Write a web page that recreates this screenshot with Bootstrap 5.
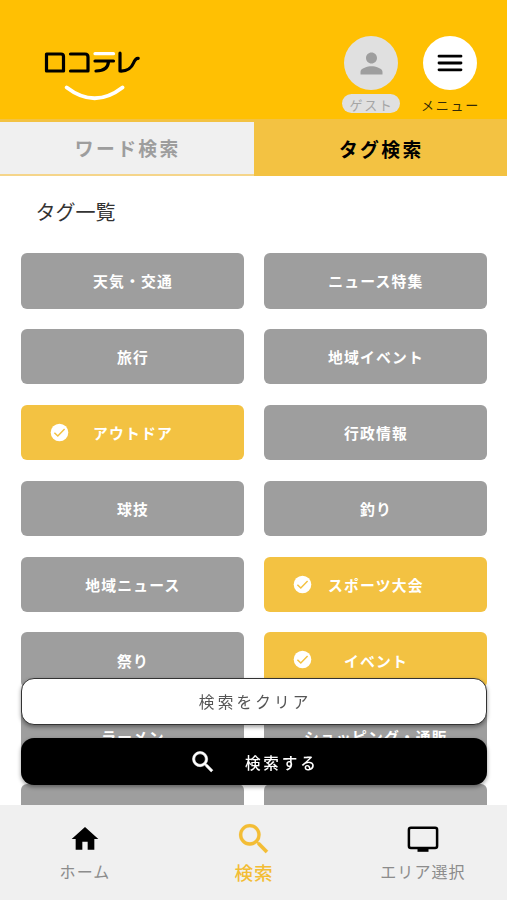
<!DOCTYPE html>
<html lang="ja">
<head>
<meta charset="utf-8">
<meta name="viewport" content="width=device-width, initial-scale=1">
<title>ロコテレ タグ検索</title>
<link href="https://cdn.jsdelivr.net/npm/bootstrap@5.3.0/dist/css/bootstrap.min.css" rel="stylesheet">
<style>
  body { font-family: "Noto Sans CJK JP", sans-serif; color: #333; overflow: hidden; line-height: 1.5; }
  svg { display: block; flex: none; }
  .app { height: 900px; overflow: hidden; }
  .top-bar { height: 119px; background: #ffc003; padding: 36px 27px 0 44px; }
  .logo { margin-top: 14px; }
  .top-items { gap: 19px; }
  .top-item { width: 60px; font-size: 13px; letter-spacing: 1.7px; line-height: 19px; }
  .round-icon { width: 54px; height: 54px; background: #fff; }
  .round-icon.guest { background: #e0e0e0; }
  .pill { width: 58px; height: 19px; margin-top: 4px; padding: 1px 0 0 1px; background: #e0e0e0; color: #a5a5a5; }
  .menu-label { margin: 5px 0 0 1px; color: #332a08; white-space: nowrap; }
  .tabs { height: 57px; background: #f3c242; padding: 3px 0 0; font-size: 18.8px; font-weight: 700; letter-spacing: 2.4px; }
  .tab-item { width: 50%; padding: 0 0 0 2px; color: #000; }
  .tab-item.off { background: #f0f0f0; color: #9d9d9d; border-bottom: 2px solid #f5d58a; padding-top: 1px; }
  .heading { font-size: 20px; line-height: 30px; margin: 20.5px 0 26.5px 35.5px; font-weight: 400; color: #333; }
  .tags { padding: 0 20.5px 0 21px; display: grid; grid-template-columns: 1fr 1fr; gap: 20.3px; }
  .tag { height: 55.6px; border: 0; border-radius: 6px; background: #9e9e9e; color: #fff; font-size: 14.8px; font-weight: 700; letter-spacing: 1.2px; padding: 1px 0 0 1.4px; }
  .tag.on { background: #f3c242; }
  .tag .tick { left: 29px; top: 18px; }
  .actions { bottom: 115px; padding: 0 20.5px 0 21px; gap: 13.5px; }
  .action { height: 47px; border-radius: 13px; font-size: 15.6px; box-shadow: 0 2px 4px rgba(0,0,0,.4); padding: 1px 0 0; }
  .clear { background: #fff; border: 1.2px solid #333; color: #555; letter-spacing: 3.2px; padding-left: 3px; }
  .go { background: #000; color: #fff; border: 0; font-weight: 500; letter-spacing: 2.8px; padding-top: 2px; }
  .go svg { margin: -2px 28px 0 0; }
  .bottom-nav { height: 95px; background: #f0f0f0; color: #8c8c8c; font-size: 16px; letter-spacing: 1.1px; }
  .nav-cell { width: 33.333%; padding: 17px 0 0 1px; }
  .nav-cell span { line-height: 24px; margin-top: 3px; }
  .nav-cell.now { color: #f3bd35; font-weight: 500; font-size: 18.6px; letter-spacing: .8px; padding-top: 16px; }
</style>
<script src="https://cdn.jsdelivr.net/npm/bootstrap@5.3.0/dist/js/bootstrap.bundle.min.js"></script>
</head>
<body>
<div class="app bg-white">
  <header class="top-bar d-flex justify-content-between align-items-start">
    <svg class="logo" width="98" height="54" viewBox="44 50 98 54" fill="none" stroke="#000" stroke-width="3.2" stroke-linecap="round" stroke-linejoin="round" role="img" aria-label="ロコテレ">
      <path d="M46.5 54H61Q63.5 54 63.5 56.5V71H46.5Z"/>
      <path d="M70.5 54H85Q88 54 88 57V71H70.5"/>
      <path d="M95 61H113.5M108.5 61.5Q108 71 96 71"/>
      <path d="M120 53.2V71Q130 71.5 133.5 63Q135.5 58 138.2 58.3"/>
      <path d="M95 53.7H113.5" stroke="#fff"/>
      <path d="M66.7 87.5Q94.7 109 122.5 87.5" stroke="#fff" stroke-width="3.8"/>
    </svg>
    <div class="top-items d-flex">
      <div class="top-item d-flex flex-column align-items-center">
        <div class="round-icon guest rounded-circle d-flex align-items-center justify-content-center">
          <svg width="33" height="33" viewBox="0 0 24 24" fill="#9e9e9e"><path d="M12 12c2.21 0 4-1.79 4-4s-1.79-4-4-4-4 1.79-4 4 1.79 4 4 4zm0 2c-2.67 0-8 1.34-8 4v2h16v-2c0-2.66-5.33-4-8-4z"/></svg>
        </div>
        <div class="pill rounded-pill text-center">ゲスト</div>
      </div>
      <div class="top-item d-flex flex-column align-items-center">
        <div class="round-icon rounded-circle d-flex align-items-center justify-content-center">
          <svg width="26" height="18" viewBox="0 0 26 18" stroke="#000" stroke-width="2.8" stroke-linecap="round"><path d="M2 2.2H24M2 9H24M2 15.8H24"/></svg>
        </div>
        <div class="menu-label">メニュー</div>
      </div>
    </div>
  </header>

  <nav class="tabs d-flex">
    <div class="tab-item off d-flex align-items-center justify-content-center">ワード検索</div>
    <div class="tab-item d-flex align-items-center justify-content-center">タグ検索</div>
  </nav>

  <main>
    <h1 class="heading">タグ一覧</h1>
    <div class="tags">
      <button class="tag position-relative">天気・交通</button>
      <button class="tag position-relative">ニュース特集</button>
      <button class="tag position-relative">旅行</button>
      <button class="tag position-relative">地域イベント</button>
      <button class="tag on position-relative"><svg class="tick position-absolute" width="19" height="19" viewBox="0 0 19 19"><circle cx="9.5" cy="9.5" r="8.8" fill="#fff"/><path d="M4.4 9.7L7.8 13L14.6 6" fill="none" stroke="#f3c242" stroke-width="1.5"/></svg>アウトドア</button>
      <button class="tag position-relative">行政情報</button>
      <button class="tag position-relative">球技</button>
      <button class="tag position-relative">釣り</button>
      <button class="tag position-relative">地域ニュース</button>
      <button class="tag on position-relative"><svg class="tick position-absolute" width="19" height="19" viewBox="0 0 19 19"><circle cx="9.5" cy="9.5" r="8.8" fill="#fff"/><path d="M4.4 9.7L7.8 13L14.6 6" fill="none" stroke="#f3c242" stroke-width="1.5"/></svg>スポーツ大会</button>
      <button class="tag position-relative">祭り</button>
      <button class="tag on position-relative"><svg class="tick position-absolute" width="19" height="19" viewBox="0 0 19 19"><circle cx="9.5" cy="9.5" r="8.8" fill="#fff"/><path d="M4.4 9.7L7.8 13L14.6 6" fill="none" stroke="#f3c242" stroke-width="1.5"/></svg>イベント</button>
      <button class="tag position-relative">ラーメン</button>
      <button class="tag position-relative">ショッピング・通販</button>
      <button class="tag position-relative"></button>
      <button class="tag position-relative"></button>
    </div>
  </main>
</div>

<div class="actions position-fixed start-0 end-0 d-flex flex-column">
  <button class="action clear">検索をクリア</button>
  <button class="action go d-flex align-items-center justify-content-center">
    <svg width="28" height="28" viewBox="0 0 24 24" fill="#fff" stroke="#fff" stroke-width=".5"><path d="M15.5 14h-.79l-.28-.27A6.471 6.471 0 0 0 16 9.5 6.5 6.5 0 1 0 9.5 16c1.61 0 3.09-.59 4.23-1.57l.27.28v.79l5 4.99L20.49 19l-4.99-5zm-6 0C7.01 14 5 11.99 5 9.5S7.01 5 9.5 5 14 7.01 14 9.5 11.99 14 9.5 14z"/></svg>検索する
  </button>
</div>

<footer class="bottom-nav fixed-bottom d-flex">
  <div class="nav-cell d-flex flex-column align-items-center">
    <svg width="32" height="34" viewBox="0 0 24 24" fill="#000"><path d="M10 20v-6h4v6h5v-8h3L12 3 2 12h3v8z"/></svg>
    <span>ホーム</span>
  </div>
  <div class="nav-cell now d-flex flex-column align-items-center">
    <svg width="40" height="36" viewBox="0 0 24 24" preserveAspectRatio="xMidYMid slice" fill="#f3bd35" stroke="#f3bd35" stroke-width=".1"><path d="M15.5 14h-.79l-.28-.27A6.471 6.471 0 0 0 16 9.5 6.5 6.5 0 1 0 9.5 16c1.61 0 3.09-.59 4.23-1.57l.27.28v.79l5 4.99L20.49 19l-4.99-5zm-6 0C7.01 14 5 11.99 5 9.5S7.01 5 9.5 5 14 7.01 14 9.5 11.99 14 9.5 14z"/></svg>
    <span>検索</span>
  </div>
  <div class="nav-cell d-flex flex-column align-items-center">
    <svg width="34" height="34" viewBox="0 0 34 34"><rect x="2.9" y="5.8" width="28.2" height="20.2" rx="2" fill="none" stroke="#000" stroke-width="2.5"/><path d="M11.5 26h11v3.800h-11z"/></svg>
    <span>エリア選択</span>
  </div>
</footer>
</body>
</html>
